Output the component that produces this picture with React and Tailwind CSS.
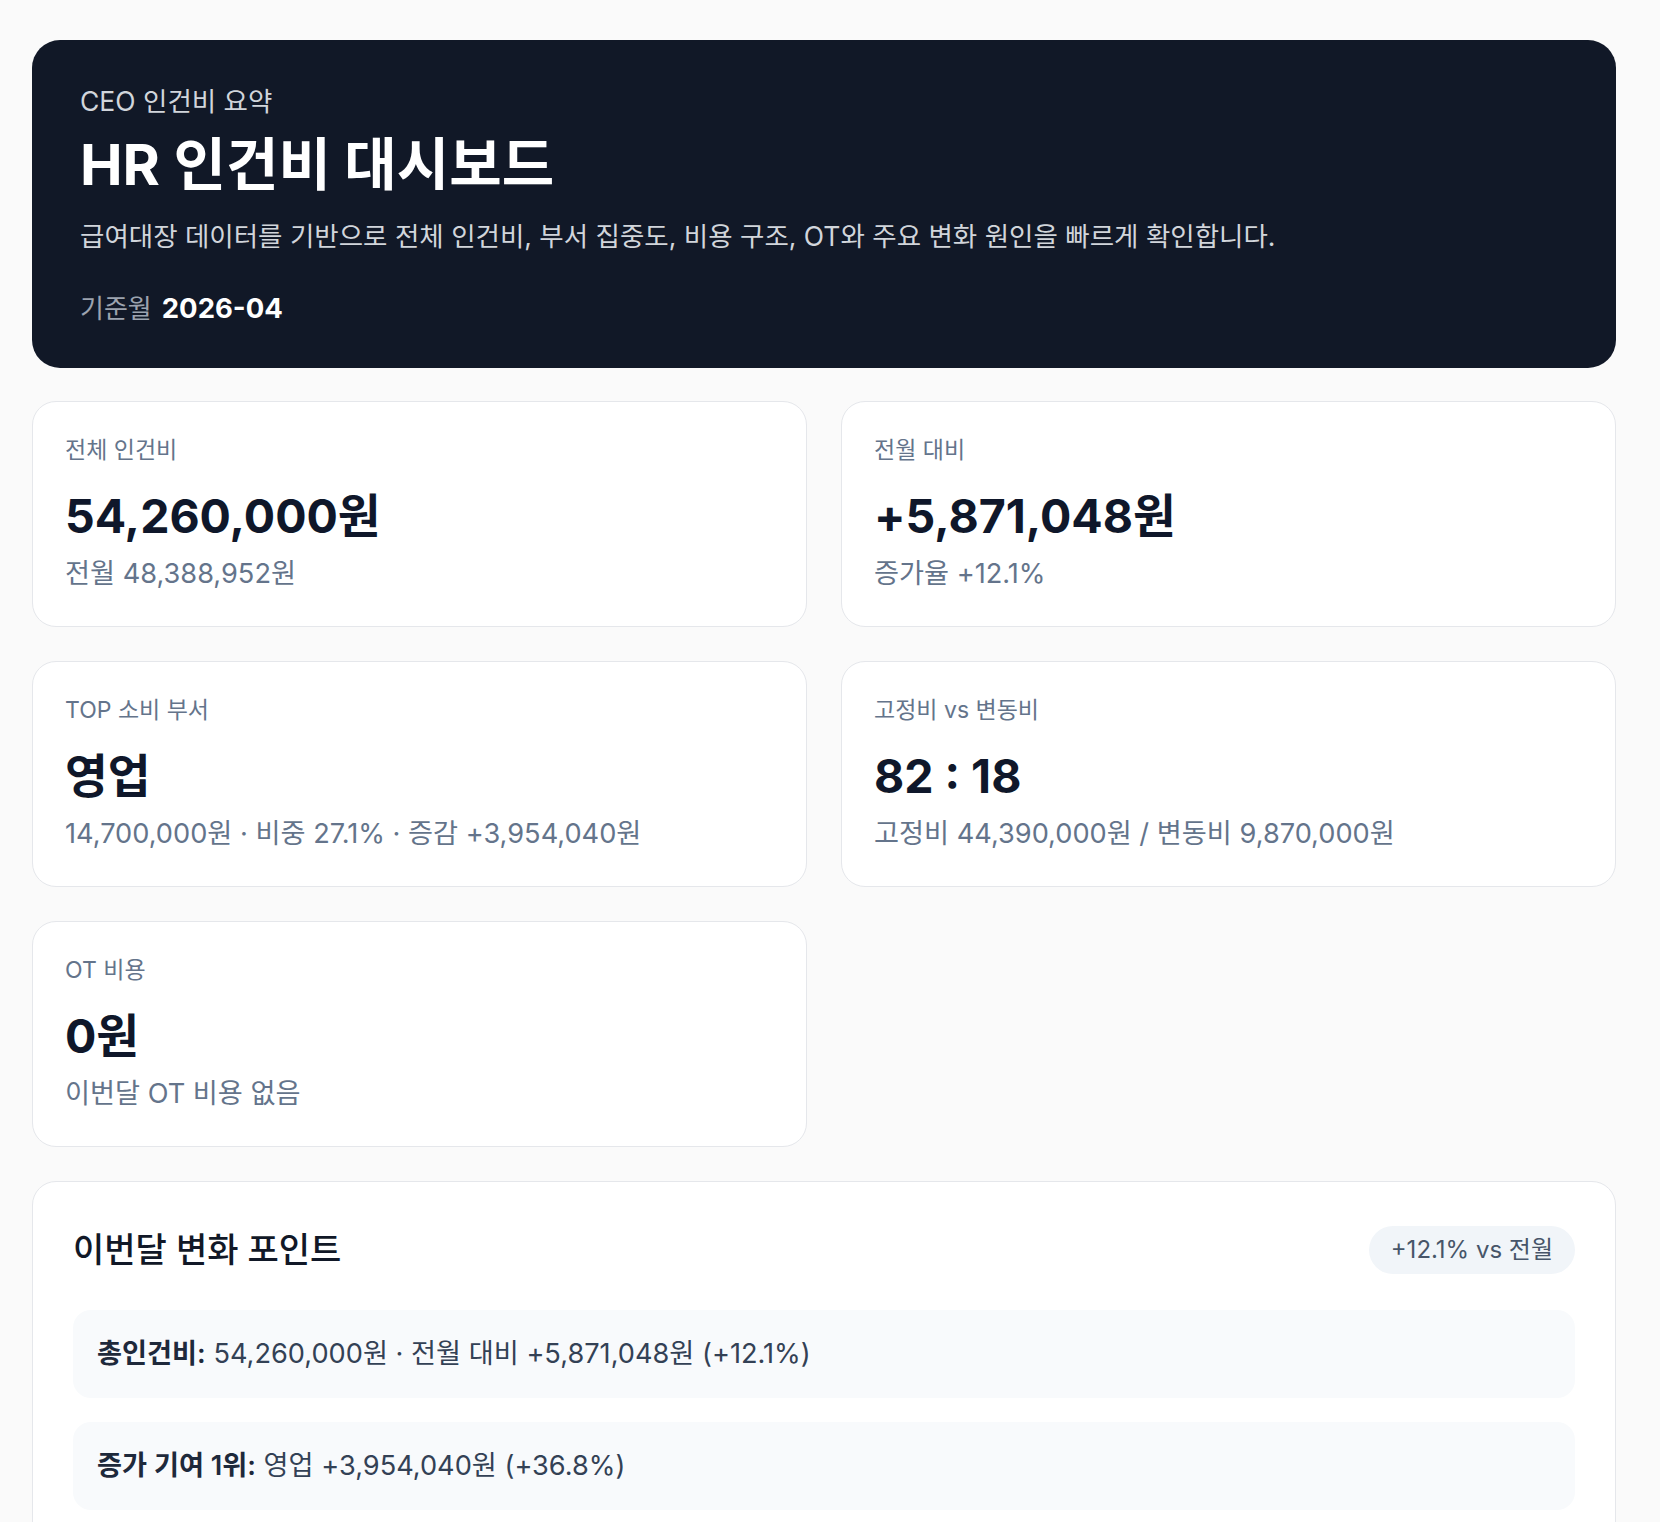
import React from "react";

const font = { fontFamily: "Inter, 'Noto Sans CJK KR', sans-serif" };

function Card({ label, value, sub }) {
  return (
    <div className="h-[226px] rounded-[24px] border border-[#e5e7eb] bg-white px-8 pt-8">
      <div className="text-[23px] leading-[32px] text-[#64748b]">{label}</div>
      <div className="mt-[23px] text-[46.5px] font-bold leading-[54px] text-[#0f172a]">{value}</div>
      <div className="mt-[13px] text-[27.2px] leading-[36px] text-[#64748b]">{sub}</div>
    </div>
  );
}

function Item({ label, text }) {
  return (
    <div className="rounded-[18px] bg-[#f8fafc] px-6 py-6 text-[27.2px] leading-[40px] text-[#334155]">
      <span className="font-semibold text-[#1e293b]">{label}</span> {text}
    </div>
  );
}

export default function App() {
  return (
    <div className="min-h-screen bg-[#fafafa]" style={font}>
      <div className="pl-8 pt-10 pb-10">
        <div className="w-[1584px]">
          <div className="h-[328px] rounded-[28px] bg-[#111827] px-12 pt-12">
            <div className="text-[26.5px] leading-[26px] text-[#d1d5db]">CEO 인건비 요약</div>
            <h1 className="mt-[20px] text-[57px] font-bold leading-[62px] text-white">HR 인건비 대시보드</h1>
            <p className="mt-[21px] text-[26.5px] leading-[38px] text-[#d1d5db]">
              급여대장 데이터를 기반으로 전체 인건비, 부서 집중도, 비용 구조, OT와 주요 변화 원인을 빠르게 확인합니다.
            </p>
            <div className="mt-[39px] flex items-baseline gap-[10px] leading-[28px]">
              <span className="text-[26px] text-[#9ca3af]">기준월</span>
              <span className="text-[27.5px] font-bold text-white">2026-04</span>
            </div>
          </div>

          <div className="mt-[33px] grid grid-cols-2 gap-[34px]">
            <Card label="전체 인건비" value="54,260,000원" sub="전월 48,388,952원" />
            <Card label="전월 대비" value="+5,871,048원" sub="증가율 +12.1%" />
            <Card label="TOP 소비 부서" value="영업" sub="14,700,000원 · 비중 27.1% · 증감 +3,954,040원" />
            <Card label="고정비 vs 변동비" value="82 : 18" sub="고정비 44,390,000원 / 변동비 9,870,000원" />
            <Card label="OT 비용" value="0원" sub="이번달 OT 비용 없음" />
          </div>

          <div className="mt-[34px] rounded-[24px] border border-[#e5e7eb] bg-white px-10 pt-[44px] pb-10">
            <div className="flex items-center justify-between">
              <h2 className="text-[34px] font-medium leading-[40px] text-[#111827]">이번달 변화 포인트</h2>
              <span className="flex h-[48px] items-center rounded-full bg-[#f1f5f9] px-[22px] text-[24px] text-[#475569]">
                +12.1% vs 전월
              </span>
            </div>
            <div className="mt-[36px] flex flex-col gap-[24px]">
              <Item label="총인건비:" text="54,260,000원 · 전월 대비 +5,871,048원 (+12.1%)" />
              <Item label="증가 기여 1위:" text="영업 +3,954,040원 (+36.8%)" />
              <Item label="고정비 비중:" text="82% · 변동비 18%" />
            </div>
          </div>
        </div>
      </div>
    </div>
  );
}
